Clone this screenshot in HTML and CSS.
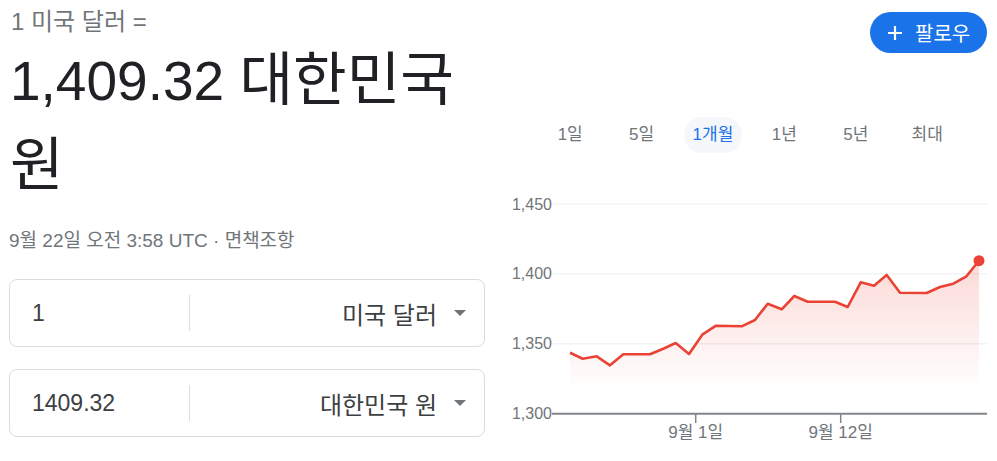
FILE: index.html
```html
<!DOCTYPE html>
<html lang="ko">
<head>
<meta charset="utf-8">
<link rel="stylesheet" href="styles.css">
</head>
<body>
<div class="page">
  <section class="left">
    <div class="from">1 미국 달러 =</div>
    <div class="result"><span class="num">1,409.32</span> <span class="ko">대한민국</span> <span class="ko">원</span></div>
    <div class="date">9월 22일 오전 3:58 UTC · <span class="disclaimer">면책조항</span></div>
    <div class="box first">
      <div class="amount">1</div>
      <div class="divider"></div>
      <div class="currency"><span>미국 달러</span><span class="caret"></span></div>
    </div>
    <div class="box second">
      <div class="amount">1409.32</div>
      <div class="divider"></div>
      <div class="currency"><span>대한민국 원</span><span class="caret"></span></div>
    </div>
  </section>
  <section class="right">
    <div class="top">
      <button class="follow">
        <svg width="16" height="16" viewBox="0 0 16 16"><path d="M8 1v14M1 8h14" stroke="#fff" stroke-width="2.2" fill="none"/></svg>
        <span>팔로우</span>
      </button>
    </div>
    <div class="tabs">
      <div class="tab">1일</div>
      <div class="tab">5일</div>
      <div class="tab active">1개월</div>
      <div class="tab">1년</div>
      <div class="tab">5년</div>
      <div class="tab">최대</div>
    </div>
    <svg class="chart" width="497" height="260" viewBox="0 0 497 260">
      <defs>
        <linearGradient id="fill" x1="0" y1="0" x2="0" y2="1">
          <stop offset="0" stop-color="#ea4335" stop-opacity="0.2"/>
          <stop offset="1" stop-color="#ea4335" stop-opacity="0"/>
        </linearGradient>
      </defs>
      <g stroke="#f1f3f4" stroke-width="1.5">
        <line x1="53" y1="14" x2="487" y2="14"/>
        <line x1="53" y1="83.7" x2="487" y2="83.7"/>
        <line x1="53" y1="153.7" x2="487" y2="153.7"/>
      </g>
      <g class="ylab" text-anchor="end">
        <text x="52" y="19.5">1,450</text>
        <text x="52" y="89.2">1,400</text>
        <text x="52" y="159.2">1,350</text>
        <text x="52" y="229.2">1,300</text>
      </g>
      <path fill="url(#fill)" d="M70,162.7 L82.7,168.7 L96.7,166.3 L110,175.3 L123.3,164.3 L150,164.3 L163.3,158.7 L175.7,153 L189,164 L202.3,144.7 L216,135.7 L241.7,136.3 L255,130 L267.7,113.7 L281.7,119.3 L294.3,106 L307.7,111.7 L335,111.7 L347.7,117 L360.7,92.3 L374,95.7 L386.7,85 L400,102.7 L426.7,103 L440,97 L453.3,93.7 L466,86.7 L479,70.7 L479,201.7 L70,201.7 Z"/>
      <polyline fill="none" stroke="#ea4335" stroke-width="2.6" stroke-linejoin="round" points="70,162.7 82.7,168.7 96.7,166.3 110,175.3 123.3,164.3 150,164.3 163.3,158.7 175.7,153 189,164 202.3,144.7 216,135.7 241.7,136.3 255,130 267.7,113.7 281.7,119.3 294.3,106 307.7,111.7 335,111.7 347.7,117 360.7,92.3 374,95.7 386.7,85 400,102.7 426.7,103 440,97 453.3,93.7 466,86.7 479,70.7"/>
      <circle cx="479" cy="70.7" r="5.5" fill="#ea4335"/>
      <g stroke="#80868b">
        <line x1="52" y1="223.7" x2="487" y2="223.7" stroke-width="2"/>
        <line x1="195.7" y1="223" x2="195.7" y2="233" stroke-width="1.5"/>
        <line x1="340.7" y1="223" x2="340.7" y2="233" stroke-width="1.5"/>
      </g>
      <g class="xlab" text-anchor="middle">
        <text x="195.7" y="248">9월 1일</text>
        <text x="340.7" y="248">9월 12일</text>
      </g>
    </svg>
  </section>
</div>
</body>
</html>
```

FILE: styles.css
```css
* { box-sizing: border-box; }
html, body {
  margin: 0;
  padding: 0;
  background: #fff;
  font-family: "Liberation Sans", Arial, "Noto Sans CJK KR", sans-serif;
}
.page {
  display: flex;
  width: 997px;
  height: 461px;
  overflow: hidden;
}
.left {
  width: 500px;
  padding: 8px 0 0 9px;
  display: flex;
  flex-direction: column;
}
.from {
  font-size: 24px;
  line-height: 28px;
  color: #70757a;
  padding-left: 2px;
}
.result {
  font-size: 55px;
  line-height: 83px;
  color: #202124;
  width: 470px;
  margin-top: 2px;
  padding-left: 1px;
}
.result .ko {
  font-size: 1.06em;
  line-height: 83px;
}
.date {
  font-size: 19px;
  line-height: 24px;
  color: #70757a;
  margin-top: 21px;
}
.box {
  width: 476px;
  height: 68px;
  border: 1px solid #dadce0;
  border-radius: 8px;
  display: flex;
  align-items: center;
}
.box.first { margin-top: 26px; }
.box.second { margin-top: 22px; }
.amount {
  width: 179px;
  padding-left: 22px;
  font-size: 23px;
  color: #3c4043;
}
.divider {
  width: 1px;
  height: 36px;
  background: #dadce0;
}
.currency {
  flex: 1;
  display: flex;
  align-items: center;
  justify-content: flex-end;
  gap: 17px;
  padding-right: 18px;
  font-size: 24px;
  color: #3c4043;
}
.caret {
  width: 0;
  height: 0;
  border-left: 6px solid transparent;
  border-right: 6px solid transparent;
  border-top: 6px solid #70757a;
}
.right {
  width: 497px;
  display: flex;
  flex-direction: column;
}
.top {
  display: flex;
  justify-content: flex-end;
  padding: 12px 10px 0 0;
}
.follow {
  display: flex;
  align-items: center;
  gap: 12px;
  height: 41px;
  width: 117px;
  padding: 0 0 0 17px;
  border: none;
  border-radius: 21px;
  background: #1a73e8;
  color: #fff;
  font-family: "Liberation Sans", "Noto Sans CJK KR", sans-serif;
  font-size: 20px;
}
.tabs {
  display: grid;
  grid-template-columns: repeat(6, 71.4px);
  padding-left: 34.5px;
  margin-top: 64px;
}
.tab {
  justify-self: center;
  height: 36px;
  line-height: 36px;
  padding: 0 9px;
  border-radius: 18px;
  font-size: 17px;
  color: #70757a;
}
.tab.active {
  background: #f5f7fa;
  color: #1a73e8;
}
.chart {
  display: block;
  margin-top: 37px;
}
.ylab text, .xlab text {
  font-family: "Liberation Sans", "Noto Sans CJK KR", sans-serif;
  font-size: 16px;
  fill: #70757a;
}
.xlab text {
  font-size: 17px;
}
```
